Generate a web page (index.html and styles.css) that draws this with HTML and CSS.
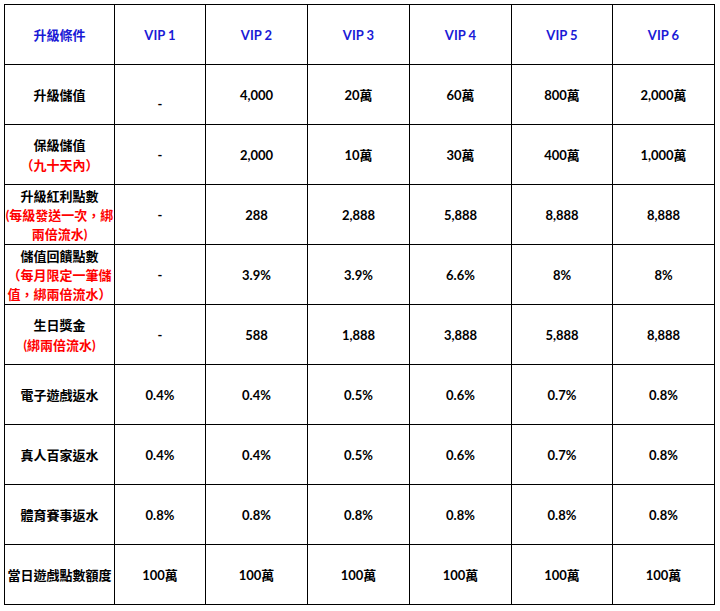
FILE: index.html
```html
<!DOCTYPE html>
<html lang="zh-Hant">
<head>
<meta charset="utf-8">
<title>VIP 升級條件</title>
<link rel="stylesheet" href="styles.css">
</head>
<body>
<table class="vip">
  <colgroup>
    <col class="c-label">
    <col class="c-1">
    <col class="c-n">
    <col class="c-n">
    <col class="c-n">
    <col class="c-5">
    <col class="c-n">
  </colgroup>
  <thead>
    <tr class="head">
      <th>升級條件</th>
      <th>VIP 1</th>
      <th>VIP 2</th>
      <th>VIP 3</th>
      <th>VIP 4</th>
      <th>VIP 5</th>
      <th>VIP 6</th>
    </tr>
  </thead>
  <tbody>
    <tr>
      <td>升級儲值</td>
      <td><span class="low">-</span></td>
      <td>4,000</td>
      <td>20萬</td>
      <td>60萬</td>
      <td>800萬</td>
      <td>2,000萬</td>
    </tr>
    <tr>
      <td>保級儲值<br><span class="note">（九十天內）</span></td>
      <td>-</td>
      <td>2,000</td>
      <td>10萬</td>
      <td>30萬</td>
      <td>400萬</td>
      <td>1,000萬</td>
    </tr>
    <tr>
      <td class="multi">升級紅利點數<br><span class="note">(每級發送一次，綁<br>兩倍流水)</span></td>
      <td>-</td>
      <td>288</td>
      <td>2,888</td>
      <td>5,888</td>
      <td>8,888</td>
      <td>8,888</td>
    </tr>
    <tr>
      <td class="multi">儲值回饋點數<br><span class="note">（每月限定一筆儲<br>值，綁兩倍流水）</span></td>
      <td>-</td>
      <td>3.9%</td>
      <td>3.9%</td>
      <td>6.6%</td>
      <td>8%</td>
      <td>8%</td>
    </tr>
    <tr>
      <td>生日獎金<br><span class="note">(綁兩倍流水)</span></td>
      <td>-</td>
      <td>588</td>
      <td>1,888</td>
      <td>3,888</td>
      <td>5,888</td>
      <td>8,888</td>
    </tr>
    <tr>
      <td>電子遊戲返水</td>
      <td>0.4%</td>
      <td>0.4%</td>
      <td>0.5%</td>
      <td>0.6%</td>
      <td>0.7%</td>
      <td>0.8%</td>
    </tr>
    <tr>
      <td>真人百家返水</td>
      <td>0.4%</td>
      <td>0.4%</td>
      <td>0.5%</td>
      <td>0.6%</td>
      <td>0.7%</td>
      <td>0.8%</td>
    </tr>
    <tr>
      <td>體育賽事返水</td>
      <td>0.8%</td>
      <td>0.8%</td>
      <td>0.8%</td>
      <td>0.8%</td>
      <td>0.8%</td>
      <td>0.8%</td>
    </tr>
    <tr>
      <td>當日遊戲點數額度</td>
      <td>100萬</td>
      <td>100萬</td>
      <td>100萬</td>
      <td>100萬</td>
      <td>100萬</td>
      <td>100萬</td>
    </tr>
  </tbody>
</table>
</body>
</html>
```

FILE: styles.css
```css
html, body {
  margin: 0;
  padding: 0;
  background: #ffffff;
}

body {
  padding: 4px 0 0 4px;
  font-family: Lato, "Noto Sans CJK TC", sans-serif;
  font-weight: 700;
  font-size: 13px;
  line-height: 20px;
  color: #000000;
}

.vip {
  border-collapse: collapse;
  table-layout: fixed;
  width: 711px;
}

.c-label { width: 110px; }
.c-1 { width: 91px; }
.c-n { width: 102px; }
.c-5 { width: 101px; }

.vip th,
.vip td {
  border: 1px solid #000000;
  padding: 0;
  height: 59px;
  text-align: center;
  vertical-align: middle;
  white-space: nowrap;
  font-weight: 700;
}

.head th {
  color: #1a1ad6;
}

.note {
  color: #ff0000;
}

.vip td.multi {
  line-height: 19px;
  padding-top: 2px;
  height: 57px;
}

.low {
  display: inline-block;
  padding-top: 18px;
}
```
